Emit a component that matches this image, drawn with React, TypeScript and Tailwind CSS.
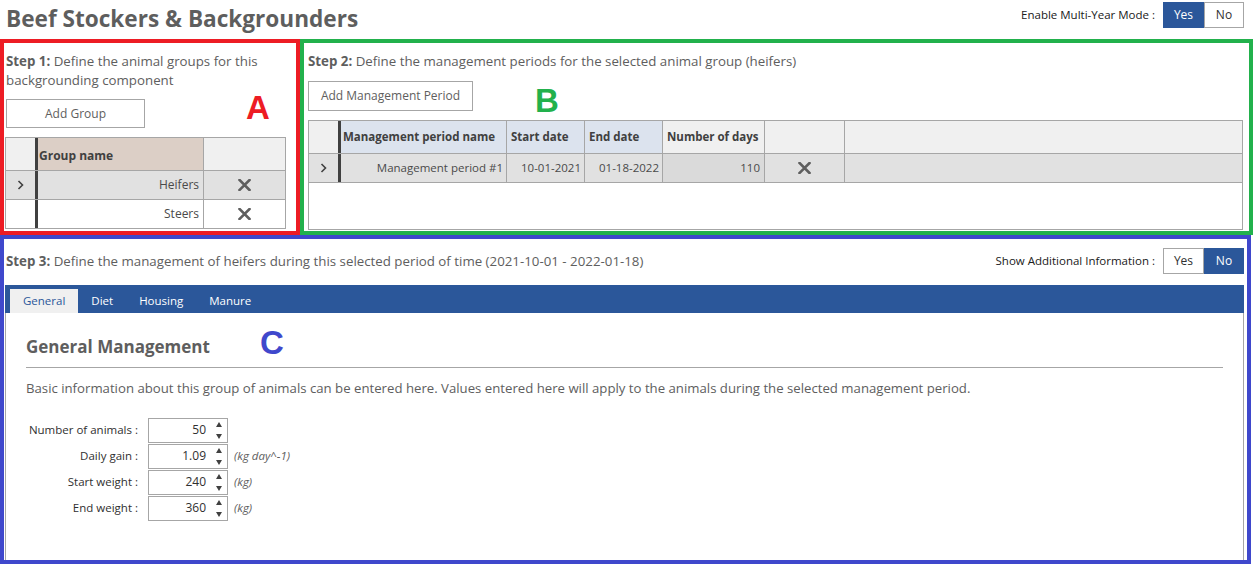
import React from "react";

const XIcon = () => (
	<svg width="13" height="12" viewBox="0 0 13 12">
		<path d="M1.5 1 L11.5 11 M11.5 1 L1.5 11" stroke="#5f5f5f" strokeWidth="2.6" strokeLinecap="square" />
	</svg>
);

const Chevron = () => (
	<svg width="7" height="10" viewBox="0 0 7 10">
		<path d="M1.5 1 L5.5 5 L1.5 9" stroke="#404040" strokeWidth="1.6" fill="none" />
	</svg>
);

const Spinner = () => (
	<div className="flex flex-col items-center justify-between h-[17px] w-[8px]">
		<svg width="6" height="5" viewBox="0 0 6 5"><path d="M3 0 L6 5 L0 5 Z" fill="#404040" /></svg>
		<svg width="6" height="5" viewBox="0 0 6 5"><path d="M0 0 L6 0 L3 5 Z" fill="#404040" /></svg>
	</div>
);

const Toggle: React.FC<{ label: string; yes: boolean }> = ({ label, yes }) => (
	<div className="flex items-center">
		<span className="text-[11.5px] text-[#202020] mr-[8px] whitespace-nowrap">{label}</span>
		<div
			className={`w-[41px] h-[26px] flex items-center justify-center text-[12px] border ${
				yes ? "bg-[#2b579a] border-[#2b579a] text-white" : "bg-white border-[#a6a6a6] text-[#303030]"
			}`}
		>
			Yes
		</div>
		<div
			className={`w-[40px] h-[26px] flex items-center justify-center text-[12px] border ${
				!yes ? "bg-[#2b579a] border-[#2b579a] text-white" : "bg-white border-[#a6a6a6] text-[#303030]"
			}`}
		>
			No
		</div>
	</div>
);

const FormRow: React.FC<{ label: string; value: string; unit?: string }> = ({ label, value, unit }) => (
	<div className="flex items-center h-[26px]">
		<div className="w-[112px] flex justify-end">
			<span className="whitespace-nowrap text-[11.5px] text-[#303030]">{label}</span>
		</div>
		<div className="ml-[10px] w-[80px] h-[25px] border border-[#a6a6a6] flex items-center justify-end pr-[4px] bg-white">
			<span className="text-[12px] text-[#303030] mr-[9px]">{value}</span>
			<Spinner />
		</div>
		{unit && <span className="ml-[6px] text-[11.5px] italic text-[#5e5e5e]">{unit}</span>}
	</div>
);

export default function App() {
	return (
		<div className="w-[1256px] h-[567px] bg-white font-['Open_Sans',sans-serif] relative overflow-hidden">
			{/* header */}
			<div className="w-[1253px] h-[39px] flex items-start justify-between">
				<h1 className="ml-[6px] mt-[3px] text-[22.6px] leading-[31px] font-bold text-[#5e5e5e]">
					Beef Stockers &amp; Backgrounders
				</h1>
				<div className="mt-[2px] mr-[9px]">
					<Toggle label="Enable Multi-Year Mode :" yes />
				</div>
			</div>

			{/* steps 1 and 2 */}
			<div className="flex w-[1253px] h-[196px]">
				<div className="w-[300px] h-full border-[4px] border-[#ed1c24] pl-[2px] pt-[9px]">
					<div className="text-[13.3px] leading-[19px] text-[#5e5e5e]">
						<p>
							<b>Step 1:</b> Define the animal groups for this
						</p>
						<p>backgrounding component</p>
					</div>
					<button className="mt-[9px] w-[139px] h-[29px] border border-[#a6a6a6] bg-white text-[12px] text-[#5e5e5e]">
						Add Group
					</button>
					<div className="mt-[9px] -ml-[1px] w-[281px] border border-[#a6a6a6]">
						<div className="flex h-[33px] border-b border-[#a6a6a6]">
							<div className="w-[29px] bg-[#f0f0f0]" />
							<div className="w-[3px] bg-[#404040]" />
							<div className="w-[166px] bg-[#dccfc6] border-r border-[#a6a6a6] flex items-center pt-[3px] pl-[1px] text-[12px] font-bold text-[#404040]">
								Group name
							</div>
							<div className="flex-1 bg-[#f0f0f0]" />
						</div>
						<div className="flex h-[29px] border-b border-[#a6a6a6] bg-[#e1e1e1]">
							<div className="w-[29px] flex items-center justify-center">
								<Chevron />
							</div>
							<div className="w-[3px] bg-[#404040]" />
							<div className="w-[166px] border-r border-[#a6a6a6] flex items-center justify-end pr-[4px] text-[12px] text-[#4a4a4a]">
								Heifers
							</div>
							<div className="flex-1 flex items-center justify-center">
								<XIcon />
							</div>
						</div>
						<div className="flex h-[28px] bg-white">
							<div className="w-[29px]" />
							<div className="w-[3px] bg-[#404040]" />
							<div className="w-[166px] border-r border-[#a6a6a6] flex items-center justify-end pr-[4px] text-[12px] text-[#4a4a4a]">
								Steers
							</div>
							<div className="flex-1 flex items-center justify-center">
								<XIcon />
							</div>
						</div>
					</div>
				</div>

				<div className="flex-1 h-full border-[4px] border-[#22b14c] pl-[4px] pr-[6px] pt-[9px]">
					<p className="text-[13.3px] leading-[19px] text-[#5e5e5e]">
						<b>Step 2:</b> Define the management periods for the selected animal group (heifers)
					</p>
					<button className="mt-[10px] w-[165px] h-[30px] border border-[#a6a6a6] bg-white text-[12px] text-[#5e5e5e]">
						Add Management Period
					</button>
					<div className="mt-[9px] w-[935px] h-[110px] border border-[#a6a6a6]">
						<div className="flex h-[33px] border-b border-[#a6a6a6] bg-[#f0f0f0] text-[11.5px] font-bold text-[#404040]">
							<div className="w-[29px]" />
							<div className="w-[3px] bg-[#404040]" />
							<div className="w-[166px] bg-[#dce3ee] border-r border-[#a6a6a6] flex items-center pl-[2px]">
								Management period name
							</div>
							<div className="w-[78px] bg-[#dce3ee] border-r border-[#a6a6a6] flex items-center pl-[4px]">
								Start date
							</div>
							<div className="w-[78px] bg-[#dce3ee] border-r border-[#a6a6a6] flex items-center pl-[4px]">
								End date
							</div>
							<div className="w-[102px] border-r border-[#a6a6a6] flex items-center pl-[4px]">
								Number of days
							</div>
							<div className="w-[80px] border-r border-[#a6a6a6]" />
							<div className="flex-1" />
						</div>
						<div className="flex h-[29px] border-b border-[#a6a6a6] bg-[#e1e1e1] text-[11.5px] text-[#4a4a4a]">
							<div className="w-[29px] flex items-center justify-center">
								<Chevron />
							</div>
							<div className="w-[3px] bg-[#404040]" />
							<div className="w-[166px] border-r border-[#a6a6a6] flex items-center justify-end pr-[3px]">
								Management period #1
							</div>
							<div className="w-[78px] border-r border-[#a6a6a6] flex items-center justify-end pr-[3px]">
								10-01-2021
							</div>
							<div className="w-[78px] border-r border-[#a6a6a6] flex items-center justify-end pr-[3px]">
								01-18-2022
							</div>
							<div className="w-[102px] bg-[#dadada] border-r border-[#a6a6a6] flex items-center justify-end pr-[4px]">
								110
							</div>
							<div className="w-[80px] border-r border-[#a6a6a6] flex items-center justify-center">
								<XIcon />
							</div>
							<div className="flex-1" />
						</div>
					</div>
				</div>
			</div>

			{/* step 3 */}
			<div className="w-[1251px] h-[329px] border-[4px] border-[#3f48cc] pl-[1px] pr-[3px] flex flex-col">
				<div className="h-[46px] flex items-center justify-between">
					<p className="ml-[1px] -mt-[1px] text-[13.3px] leading-[19px] text-[#5e5e5e]">
						<b>Step 3:</b> Define the management of heifers during this selected period of time (2021-10-01 - 2022-01-18)
					</p>
					<div className="-mt-[3px]">
						<Toggle label="Show Additional Information :" yes={false} />
					</div>
				</div>
				<div className="h-[28px] bg-[#2b579a] flex items-end pl-[5px]">
					<div className="h-[24px] px-[13px] bg-[#f0f0f0] flex items-center text-[11.5px] text-[#2b579a]">General</div>
					<div className="h-[24px] px-[13px] flex items-center text-[11.5px] text-white">Diet</div>
					<div className="h-[24px] px-[13px] flex items-center text-[11.5px] text-white">Housing</div>
					<div className="h-[24px] px-[13px] flex items-center text-[11.5px] text-white">Manure</div>
				</div>
				<div className="flex-1 border-x border-[#a6a6a6] bg-white px-[20px] pt-[23px]">
					<h2 className="text-[17px] leading-[22px] font-bold text-[#5e5e5e]">General Management</h2>
					<div className="mt-[9px] h-px bg-[#a6a6a6]" />
					<p className="mt-[10px] text-[13.2px] leading-[20px] text-[#5e5e5e]">
						Basic information about this group of animals can be entered here. Values entered here will apply to the
						animals during the selected management period.
					</p>
					<div className="mt-[19px] flex flex-col">
						<FormRow label="Number of animals :" value="50" />
						<FormRow label="Daily gain :" value="1.09" unit="(kg day^-1)" />
						<FormRow label="Start weight :" value="240" unit="(kg)" />
						<FormRow label="End weight :" value="360" unit="(kg)" />
					</div>
				</div>
			</div>

			{/* annotation letters */}
			<span className="absolute left-[246px] top-[88px] text-[33px] leading-[40px] font-bold text-[#ed1c24] font-['Liberation_Sans',sans-serif]">
				A
			</span>
			<span className="absolute left-[535px] top-[81px] text-[33px] leading-[40px] font-bold text-[#22b14c] font-['Liberation_Sans',sans-serif]">
				B
			</span>
			<span className="absolute left-[260px] top-[323px] text-[33px] leading-[40px] font-bold text-[#3f48cc] font-['Liberation_Sans',sans-serif]">
				C
			</span>
		</div>
	);
}
